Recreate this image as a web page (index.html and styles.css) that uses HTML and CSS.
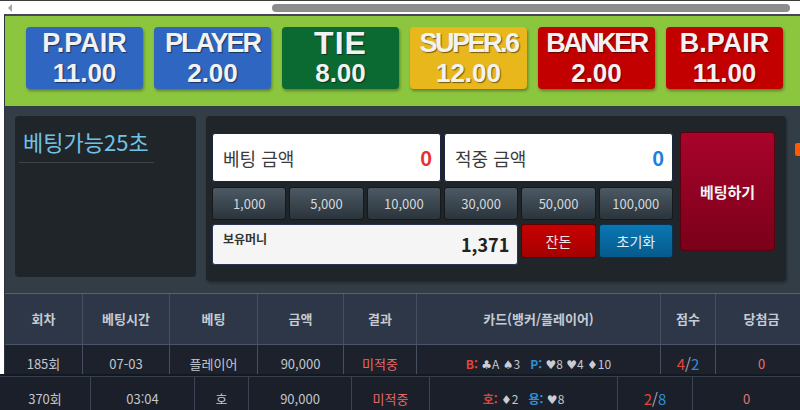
FILE: index.html
```html
<!DOCTYPE html>
<html lang="ko">
<head>
<meta charset="utf-8">
<title>Betting</title>
<link rel="stylesheet" href="styles.css">
</head>
<body>
<div class="hscroll"><span class="arrow"></span><span class="thumb"></span></div>
<div class="frame">
  <div class="odds">
    <div class="odd c-blue"><span class="lbl">P.PAIR</span><span class="val">11.00</span></div>
    <div class="odd c-blue"><span class="lbl tight">PLAYER</span><span class="val">2.00</span></div>
    <div class="odd c-green"><span class="lbl big">TIE</span><span class="val">8.00</span></div>
    <div class="odd c-yellow"><span class="lbl tighter">SUPER.6</span><span class="val">12.00</span></div>
    <div class="odd c-red"><span class="lbl tighter">BANKER</span><span class="val">2.00</span></div>
    <div class="odd c-red"><span class="lbl">B.PAIR</span><span class="val">11.00</span></div>
  </div>
  <div class="bet">
    <div class="timer-panel"><div class="timer">베팅가능25초</div></div>
    <div class="bet-panel">
      <div class="bet-grid">
        <div class="amount span3"><span>베팅 금액</span><span class="amt-val red">0</span></div>
        <div class="amount span3"><span>적중 금액</span><span class="amt-val blue">0</span></div>
        <button class="chip">1,000</button>
        <button class="chip">5,000</button>
        <button class="chip">10,000</button>
        <button class="chip">30,000</button>
        <button class="chip">50,000</button>
        <button class="chip">100,000</button>
        <div class="money"><span class="money-label">보유머니</span><span class="money-val">1,371</span></div>
        <button class="act act-red">잔돈</button>
        <button class="act act-blue">초기화</button>
      </div>
      <button class="submit">베팅하기</button>
    </div>
    <div class="side-tab"></div>
  </div>
  <div class="history">
    <div class="hrow cols1 head">
      <div class="cell">회차</div><div class="cell">베팅시간</div><div class="cell">베팅</div><div class="cell">금액</div><div class="cell">결과</div><div class="cell">카드(뱅커/플레이어)</div><div class="cell">점수</div><div class="cell">당첨금</div>
    </div>
    <div class="hrow cols1 r1">
      <div class="cell">185회</div><div class="cell">07-03</div><div class="cell">플레이어</div><div class="cell">90,000</div><div class="cell miss">미적중</div>
      <div class="cell cards"><span class="k-red">B:</span> <span class="suit">♣</span>A <span class="suit">♠</span>3&nbsp;&nbsp; <span class="k-blue">P:</span> <span class="suit">♥</span>8 <span class="suit">♥</span>4 <span class="suit">♦</span>10</div>
      <div class="cell score"><span class="k-red">4</span>/<span class="k-blue">2</span></div><div class="cell win">0</div>
    </div>
  </div>
</div>
<div class="history2">
  <div class="hrow cols2 r2">
    <div class="cell">370회</div><div class="cell">03:04</div><div class="cell">호</div><div class="cell">90,000</div><div class="cell miss">미적중</div>
    <div class="cell cards"><span class="k-red">호:</span> <span class="suit">♦</span>2&nbsp;&nbsp; <span class="k-blue">용:</span> <span class="suit">♥</span>8</div>
    <div class="cell score"><span class="k-red">2</span>/<span class="k-blue">8</span></div><div class="cell win">0</div>
  </div>
</div>
</body>
</html>
```
FILE: styles.css
```css
html, body {
  margin: 0;
  padding: 0;
  width: 800px;
  height: 410px;
  overflow: hidden;
  background: #ffffff;
}
body {
  font-family: "Noto Sans CJK KR", "Noto Sans", sans-serif;
}
button {
  font-family: inherit;
  margin: 0;
  padding: 0;
  cursor: pointer;
}

/* top horizontal scrollbar */
.hscroll {
  height: 13px;
  border-top: 1px solid #3d3d3d;
  display: flex;
  align-items: center;
}
.arrow {
  width: 0;
  height: 0;
  margin-left: 8px;
  border-right: 4px solid #a3a3a3;
  border-top: 4px solid transparent;
  border-bottom: 4px solid transparent;
}
.thumb {
  margin-left: auto;
  margin-right: 10px;
  width: 518px;
  height: 8px;
  border-radius: 4px;
  background: #8d8d8d;
}

.frame {
  margin-left: 4px;
  border-left: 1px solid #2c3340;
  border-top: 2px solid #46455a;
}

/* odds bar */
.odds {
  background: #8cc63f;
  height: 90px;
  box-sizing: border-box;
  padding: 11px 0 0 21px;
  display: flex;
  gap: 11px;
}
.odd {
  width: 117px;
  height: 62px;
  flex-shrink: 0;
  border-radius: 4px;
  box-shadow: 1px 2px 3px rgba(0, 0, 0, 0.35);
  display: flex;
  flex-direction: column;
  align-items: center;
  justify-content: center;
  gap: 3px;
  color: #f2f2f2;
  font-family: "Liberation Sans", Arial, sans-serif;
  font-weight: bold;
  text-shadow: 1px 1px 1px rgba(0, 0, 0, 0.5);
}
.c-blue { background: #2f66c2; }
.c-green { background: #0a6a32; }
.c-yellow { background: #e8b71c; }
.c-red { background: #c20000; }
.lbl {
  font-size: 27px;
  line-height: 27px;
}
.lbl.tight { letter-spacing: -2px; }
.lbl.tighter { letter-spacing: -2.5px; }
.lbl.big {
  font-size: 32px;
  letter-spacing: 1px;
}
.val {
  font-size: 26px;
  line-height: 26px;
}

/* bet area */
.bet {
  background: #323d45;
  height: 187px;
  box-sizing: border-box;
  padding: 10px 0 0 10px;
  display: flex;
  align-items: flex-start;
}
.timer-panel {
  flex-shrink: 0;
  width: 181px;
  height: 161px;
  background: #1f2529;
  border-radius: 4px;
  padding: 0 0 0 4px;
  box-sizing: border-box;
}
.timer {
  width: 135px;
  box-sizing: border-box;
  padding: 10px 0 0 4px;
  height: 47px;
  border-bottom: 1px solid #3a454d;
  color: #6fc2e5;
  font-size: 22px;
  line-height: 30px;
}
.bet-panel {
  flex-shrink: 0;
  margin-left: 10px;
  width: 580px;
  height: 165px;
  background: #1f2529;
  border-radius: 4px;
  box-sizing: border-box;
  padding: 17px 11px 0 6px;
  display: flex;
  align-items: flex-start;
  gap: 7px;
  box-shadow: 1px 2px 3px rgba(0, 0, 0, 0.3);
}
.bet-grid {
  width: 461px;
  display: grid;
  grid-template-columns: repeat(6, 1fr);
  grid-template-rows: 49px 33px 40px;
  column-gap: 3px;
  row-gap: 5px;
}
.amount {
  background: #ffffff;
  border: 1px solid #1c2440;
  border-radius: 3px;
  box-sizing: border-box;
  display: flex;
  align-items: center;
  justify-content: space-between;
  padding: 0 8px 0 10px;
  font-size: 18px;
  color: #3b3b3b;
}
.span3 { grid-column: span 3; }
.amt-val {
  font-size: 20px;
  font-weight: bold;
}
.red { color: #e8322f; }
.blue { color: #1f7ee0; }
.chip {
  border: 1px solid #15191c;
  border-radius: 3px;
  background: linear-gradient(#4c5964, #2b343b);
  color: #d3d8dd;
  font-size: 13px;
}
.money {
  grid-column: span 4;
  margin-top: -1px;
  background: #f5f5f5;
  border: 1px solid #2a3350;
  border-radius: 3px;
  box-sizing: border-box;
  display: flex;
  justify-content: space-between;
  align-items: flex-start;
  padding: 5px 8px 0 10px;
}
.money-label {
  font-size: 12px;
  font-weight: bold;
  color: #333333;
}
.money-val {
  margin-top: 1px;
  font-size: 18px;
  font-weight: bold;
  color: #222222;
}
.act {
  height: 34px;
  margin-top: -1px;
  border-radius: 3px;
  font-size: 14px;
}
.act-red {
  background: linear-gradient(#c80000, #a40000);
  border: 1px solid #5c0000;
  color: #f5e2e2;
}
.act-blue {
  background: linear-gradient(#0b77b3, #055a8c);
  border: 1px solid #0a3050;
  color: #e4eef6;
}
.submit {
  width: 95px;
  height: 119px;
  margin-top: -1px;
  border: 1px solid #5a0012;
  border-radius: 3px;
  background: linear-gradient(#a9042b, #7a0019);
  color: #f4f4f4;
  font-size: 15px;
  font-weight: bold;
}
.side-tab {
  flex-shrink: 0;
  margin: 27px 0 0 9px;
  width: 10px;
  height: 13px;
  border-radius: 2px;
  background: #ff5a00;
}

/* history table */
.history {
  border-top: 1px solid #56616c;
}
.hrow {
  display: grid;
}
.cols1 {
  grid-template-columns: 77px 87px 88px 86px 73px 244px 55px 92px;
}
.cols2 {
  grid-template-columns: 90px 104px 54px 103px 78px 188px 75px 108px;
}
.cell {
  text-align: center;
  white-space: nowrap;
  overflow: hidden;
}
.cell + .cell {
  border-left: 1px solid #454f5f;
}
.head {
  background: #2e3748;
  height: 50px;
  border-bottom: 1px solid #4a5466;
}
.head .cell {
  line-height: 50px;
  font-size: 13px;
  font-weight: bold;
  color: #c6cbd3;
}
.r1 {
  background: #1c212b;
  height: 29px;
}
.r1 .cell {
  box-sizing: border-box;
  height: 29px;
  padding-top: 9px;
  line-height: 20px;
  font-size: 13px;
  color: #c2c7cf;
}
.miss { color: #e56a6a !important; }
.win { color: #e27474 !important; }
.cards {
  font-size: 12px !important;
  color: #c2c7cf;
}
.suit {
  font-family: "DejaVu Sans", sans-serif;
  font-size: 12px;
  color: #c9cdd3;
}
.k-red { color: #e0453a; }
.k-blue { color: #2d8fd8; }
.cards .k-red, .cards .k-blue { font-weight: bold; }
.score {
  font-size: 15px !important;
  color: #aab0ba !important;
}

.history2 {
  border-top: 2px solid #141920;
}
.r2 {
  background: #1a1f29;
  border-top: 1px solid #373f4c;
  height: 44px;
}
.r2 .cell {
  line-height: 44px;
  font-size: 13px;
  color: #c2c7cf;
}
.r2 .cell + .cell { border-left-color: #3c4555; }
```
